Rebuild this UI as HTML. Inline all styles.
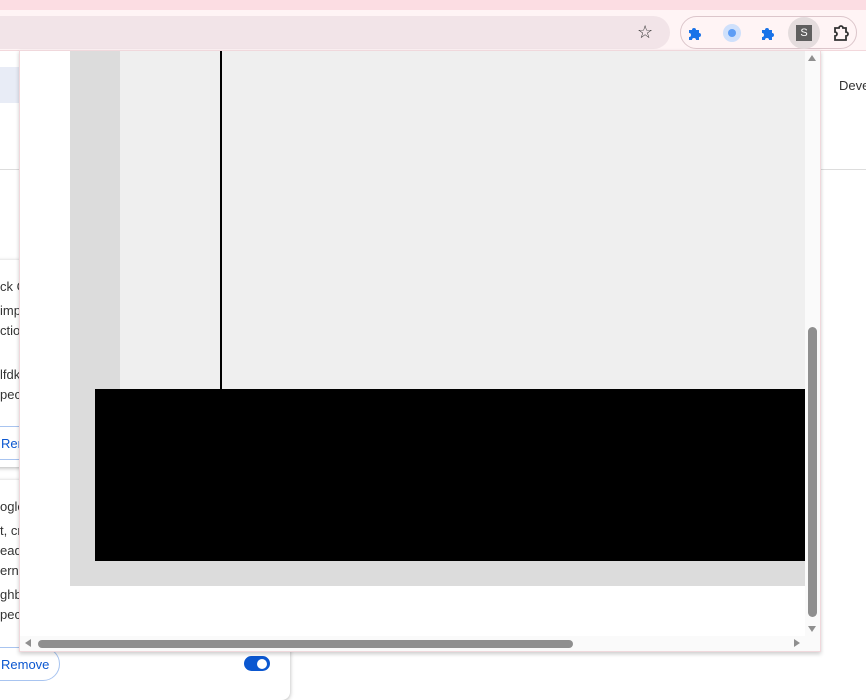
<!DOCTYPE html>
<html><head><style>
*{margin:0;padding:0;box-sizing:border-box}
body{width:866px;height:687px;overflow:hidden;background:#fff;font-family:"Liberation Sans",sans-serif;position:relative}
.a{position:absolute}
.t{font-size:13px;color:#333;position:absolute;left:0}
</style></head><body>
<div class="a" style="left:0;top:0;width:866px;height:10px;background:#fcdde3"></div>
<div class="a" style="left:0;top:10px;width:866px;height:40px;background:#fff4f5"></div>
<div class="a" style="left:0;top:16px;width:670px;height:33px;background:#f2e4e8;border-radius:0 17px 17px 0"></div>
<div class="a" style="left:637px;top:22px;font-size:18px;color:#333">☆</div>
<div class="a" style="left:680px;top:16px;width:177px;height:33px;border:1px solid #dcc6cb;border-radius:17px"></div>
<svg class="a" style="left:687px;top:25px" width="16" height="16" viewBox="0 0 16 16"><path d="M2 5h3a2 2 0 1 1 4 0h3v3a2 2 0 1 1 0 4v3H9a2 2 0 1 0-4 0H2v-3a2 2 0 1 0 0-4z" fill="#1a73e8"/></svg>
<div class="a" style="left:723px;top:24px;width:18px;height:18px;background:#cfe0fb;border-radius:50%"></div>
<div class="a" style="left:728px;top:29px;width:8px;height:8px;background:#5e9df5;border-radius:50%"></div>
<svg class="a" style="left:760px;top:25px" width="16" height="16" viewBox="0 0 16 16"><path d="M2 5h3a2 2 0 1 1 4 0h3v3a2 2 0 1 1 0 4v3H9a2 2 0 1 0-4 0H2v-3a2 2 0 1 0 0-4z" fill="#1a73e8"/></svg>
<div class="a" style="left:788px;top:17px;width:32px;height:32px;background:#e4dcdd;border-radius:50%"></div>
<div class="a" style="left:796px;top:25px;width:16px;height:16px;background:#5f5f5f;color:#fff;font-size:11px;text-align:center;line-height:16px">S</div>
<svg class="a" style="left:831px;top:23px" width="20" height="20" viewBox="0 0 20 20"><path d="M4 5h4a2 2 0 1 1 4 0h3v4a2 2 0 1 1 0 4v4H4v-4a2 2 0 1 0 0-4z" fill="none" stroke="#333" stroke-width="1.8"/></svg>
<div class="a" style="left:0;top:50px;width:866px;height:1px;background:#f3d8dc"></div>
<div class="a" style="left:0;top:67px;width:20px;height:36px;background:#e8ecf6"></div>
<div class="a" style="left:0;top:169px;width:866px;height:1px;background:#ddd"></div>
<div class="a" style="left:839px;top:78px;font-size:13px;color:#333">Deve</div>
<div class="a" style="left:-10px;top:260px;width:300px;height:207px;background:#fff;box-shadow:0 1px 4px rgba(0,0,0,.3);border-radius:8px"></div>
<div class="t" style="top:279px">ck G</div>
<div class="t" style="top:303px">imp</div>
<div class="t" style="top:323px">ctio</div>
<div class="t" style="top:367px">lfdk</div>
<div class="t" style="top:387px">pec</div>
<div class="a" style="left:-20px;top:426px;width:80px;height:34px;border:1px solid #a8c4f0;border-radius:17px;color:#0b57d0;font-size:13px;padding:9px 0 0 20px">Rem</div>
<div class="a" style="left:-10px;top:480px;width:300px;height:220px;background:#fff;box-shadow:0 1px 4px rgba(0,0,0,.3);border-radius:8px"></div>
<div class="t" style="top:499px">ogle</div>
<div class="t" style="top:523px">t, cr</div>
<div class="t" style="top:543px">ead</div>
<div class="t" style="top:563px">erne</div>
<div class="t" style="top:587px">ghb</div>
<div class="t" style="top:607px">pec</div>
<div class="a" style="left:-20px;top:647px;width:80px;height:34px;border:1px solid #a8c4f0;border-radius:17px;color:#0b57d0;font-size:13px;padding:9px 0 0 20px">Remove</div>
<div class="a" style="left:244px;top:656px;width:26px;height:15px;background:#0b57d0;border-radius:8px"></div>
<div class="a" style="left:257px;top:659px;width:10px;height:10px;background:#fff;border-radius:50%"></div>
<div class="a" style="left:19px;top:50px;width:802px;height:602px;background:#fff;border:1px solid #f0d8dc;box-shadow:0 2px 4px rgba(0,0,0,.2)">
 <div class="a" style="left:50px;top:0;width:735px;height:535px;background:#dcdcdc"></div>
 <div class="a" style="left:100px;top:0;width:685px;height:339px;background:#efefef"></div>
 <div class="a" style="left:200px;top:0;width:2px;height:340px;background:#000"></div>
 <div class="a" style="left:75px;top:338px;width:710px;height:172px;background:#000"></div>
 <div class="a" style="left:785px;top:0;width:15px;height:585px;background:#fafafa"></div>
 <div class="a" style="left:788px;top:276px;width:9px;height:290px;background:#8f8f8f;border-radius:5px"></div>
 <div class="a" style="left:788px;top:4px;width:0;height:0;border-left:4.5px solid transparent;border-right:4.5px solid transparent;border-bottom:6px solid #8f8f8f"></div>
 <div class="a" style="left:788px;top:575px;width:0;height:0;border-left:4.5px solid transparent;border-right:4.5px solid transparent;border-top:6px solid #8f8f8f"></div>
 <div class="a" style="left:0;top:585px;width:800px;height:15px;background:#fafafa"></div>
 <div class="a" style="left:18px;top:589px;width:535px;height:8px;background:#8f8f8f;border-radius:4px"></div>
 <div class="a" style="left:5px;top:588px;width:0;height:0;border-top:4.5px solid transparent;border-bottom:4.5px solid transparent;border-right:6px solid #8f8f8f"></div>
 <div class="a" style="left:774px;top:588px;width:0;height:0;border-top:4.5px solid transparent;border-bottom:4.5px solid transparent;border-left:6px solid #8f8f8f"></div>
</div>
</body></html>
